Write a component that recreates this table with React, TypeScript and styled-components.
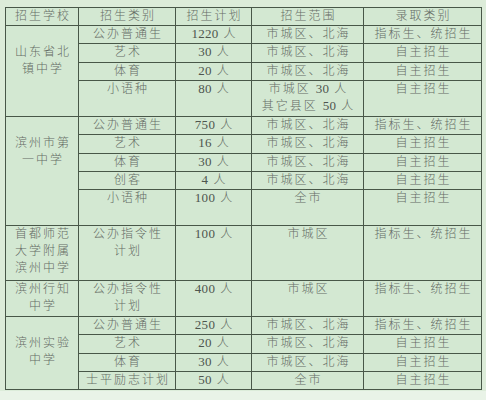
import styled, { createGlobalStyle } from "styled-components";

const GlobalStyle = createGlobalStyle`
  html, body {
    margin: 0;
    padding: 0;
    background: #e2efdf;
  }
`;

const LINE = 17;
const PITCH = 18.2;

const Page = styled.div`
  width: 486px;
  height: 400px;
  padding: 7px 0 0 5px;
  box-sizing: border-box;
  background: linear-gradient(#dcecd9, #dcecd9 391px, #e9f3e7 391px);
`;

const Table = styled.table`
  border-collapse: collapse;
  table-layout: fixed;
  width: 476px;
  background: #d3e8d2;
  font-family: "Liberation Serif", "Noto Sans CJK SC", serif;
  font-size: 12px;
  font-weight: 300;
  color: #646b64;
`;

const Row = styled.tr<{ $lines?: number }>`
  height: ${(p) => (p.$lines ?? 1) * PITCH}px;
`;

const Cell = styled.td<{ $pad?: boolean }>`
  border: 1px solid #485748;
  padding: ${(p) => (p.$pad ? `${PITCH}px` : "0")} 0 0 2px;
  line-height: ${LINE}px;
  text-align: center;
  vertical-align: top;
  letter-spacing: 2px;
  white-space: nowrap;
  overflow: hidden;
`;

const Num = styled.span`
  color: #4e554e;
  font-weight: 400;
  letter-spacing: 0.3px;
  font-size: 13px;
  line-height: 1;
`;

const HeadCell = styled(Cell).attrs({ as: "th" })`
  font-weight: 300;
  color: #666d66;
`;

type Line = {
  kind: string;
  plan: string;
  range: string;
  admit: string;
  lines?: number;
};

type School = {
  name: string[];
  pad: boolean;
  rows: Line[];
};

const schools: School[] = [
  {
    name: ["山东省北", "镇中学"],
    pad: true,
    rows: [
      { kind: "公办普通生", plan: "1220", range: "市城区、北海", admit: "指标生、统招生" },
      { kind: "艺术", plan: "30", range: "市城区、北海", admit: "自主招生" },
      { kind: "体育", plan: "20", range: "市城区、北海", admit: "自主招生" },
      { kind: "小语种", plan: "80", range: "市城区 30 人|其它县区 50 人", admit: "自主招生", lines: 2 },
    ],
  },
  {
    name: ["滨州市第", "一中学"],
    pad: true,
    rows: [
      { kind: "公办普通生", plan: "750", range: "市城区、北海", admit: "指标生、统招生" },
      { kind: "艺术", plan: "16", range: "市城区、北海", admit: "自主招生" },
      { kind: "体育", plan: "30", range: "市城区、北海", admit: "自主招生" },
      { kind: "创客", plan: "4", range: "市城区、北海", admit: "自主招生" },
      { kind: "小语种", plan: "100", range: "全市", admit: "自主招生", lines: 2 },
    ],
  },
  {
    name: ["首都师范", "大学附属", "滨州中学"],
    pad: false,
    rows: [{ kind: "公办指令性|计划", plan: "100", range: "市城区", admit: "指标生、统招生", lines: 3 }],
  },
  {
    name: ["滨州行知", "中学"],
    pad: false,
    rows: [{ kind: "公办指令性|计划", plan: "400", range: "市城区", admit: "指标生、统招生", lines: 2 }],
  },
  {
    name: ["滨州实验", "中学"],
    pad: true,
    rows: [
      { kind: "公办普通生", plan: "250", range: "市城区、北海", admit: "指标生、统招生" },
      { kind: "艺术", plan: "20", range: "市城区、北海", admit: "自主招生" },
      { kind: "体育", plan: "30", range: "市城区、北海", admit: "自主招生" },
      { kind: "士平励志计划", plan: "50", range: "全市", admit: "自主招生" },
    ],
  },
];

function withNums(text: string) {
  return text.split(/(\d+)/).map((t, i) => (/^\d+$/.test(t) ? <Num key={i}>{t}</Num> : t));
}

function Multi({ text }: { text: string }) {
  return (
    <>
      {text.split("|").map((p, i) => (
        <div key={i}>{withNums(p)}</div>
      ))}
    </>
  );
}

export default function App() {
  return (
    <>
      <GlobalStyle />
      <Page>
        <Table>
          <colgroup>
            <col style={{ width: 73 }} />
            <col style={{ width: 97 }} />
            <col style={{ width: 76 }} />
            <col style={{ width: 112 }} />
            <col style={{ width: 118 }} />
          </colgroup>
          <thead>
            <Row>
              <HeadCell>招生学校</HeadCell>
              <HeadCell>招生类别</HeadCell>
              <HeadCell>招生计划</HeadCell>
              <HeadCell>招生范围</HeadCell>
              <HeadCell>录取类别</HeadCell>
            </Row>
          </thead>
          <tbody>
            {schools.map((s) =>
              s.rows.map((r, i) => (
                <Row key={s.name.join() + i} $lines={r.lines}>
                  {i === 0 && (
                    <Cell rowSpan={s.rows.length} $pad={s.pad}>
                      {s.name.map((n) => (
                        <div key={n}>{n}</div>
                      ))}
                    </Cell>
                  )}
                  <Cell>
                    <Multi text={r.kind} />
                  </Cell>
                  <Cell>
                    <Num>{r.plan}</Num> 人
                  </Cell>
                  <Cell>
                    <Multi text={r.range} />
                  </Cell>
                  <Cell>{r.admit}</Cell>
                </Row>
              ))
            )}
          </tbody>
        </Table>
      </Page>
    </>
  );
}
